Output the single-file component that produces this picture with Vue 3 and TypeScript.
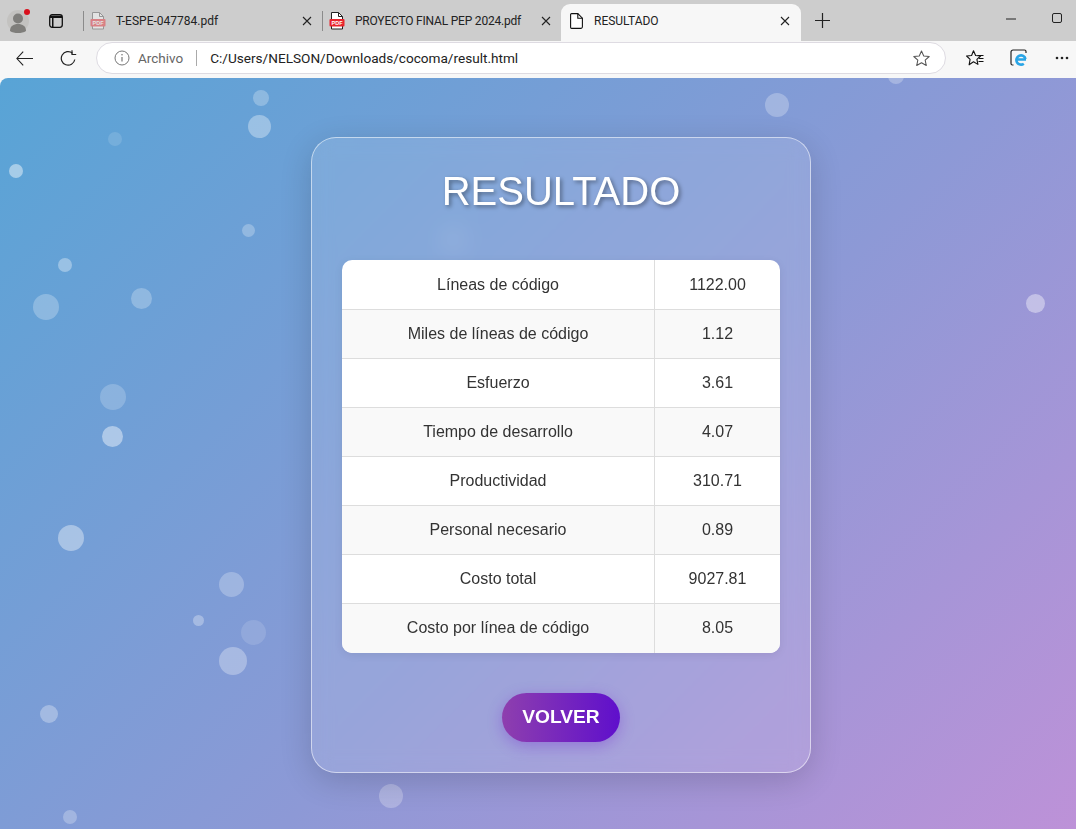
<script setup lang="ts">
interface Bubble { x: number; y: number; r: number; o: number }
const bubbles: Bubble[] = [
  { x: 261, y: 98, r: 8, o: 0.26 }, { x: 259, y: 126, r: 11.5, o: 0.34 }, { x: 115, y: 139, r: 7, o: 0.13 },
  { x: 16, y: 171, r: 7, o: 0.45 }, { x: 248, y: 230, r: 6.5, o: 0.26 }, { x: 65, y: 265, r: 7, o: 0.34 },
  { x: 46, y: 307, r: 13, o: 0.25 }, { x: 141, y: 298, r: 10.5, o: 0.25 }, { x: 113, y: 397, r: 13, o: 0.2 },
  { x: 112, y: 436, r: 10.5, o: 0.43 }, { x: 71, y: 538, r: 13, o: 0.38 }, { x: 231, y: 584, r: 12.5, o: 0.25 },
  { x: 198, y: 620, r: 5.5, o: 0.3 }, { x: 253, y: 632, r: 12.5, o: 0.13 }, { x: 233, y: 661, r: 14, o: 0.3 },
  { x: 49, y: 714, r: 9, o: 0.3 }, { x: 70, y: 817, r: 7, o: 0.26 }, { x: 391, y: 796, r: 12, o: 0.26 },
  { x: 777, y: 105, r: 12, o: 0.26 }, { x: 1035, y: 303, r: 9.5, o: 0.4 }, { x: 896, y: 76, r: 8, o: 0.26 },
  { x: 453, y: 240, r: 16, o: 0.07 },
]
const bubbleStyle = (b: Bubble) => ({
  left: `${b.x - b.r}px`,
  top: `${b.y - b.r - 78}px`,
  width: `${b.r * 2}px`,
  height: `${b.r * 2}px`,
  opacity: b.o,
})
const rows: [string, string][] = [
  ['Líneas de código', '1122.00'],
  ['Miles de líneas de código', '1.12'],
  ['Esfuerzo', '3.61'],
  ['Tiempo de desarrollo', '4.07'],
  ['Productividad', '310.71'],
  ['Personal necesario', '0.89'],
  ['Costo total', '9027.81'],
  ['Costo por línea de código', '8.05'],
]
</script>

<template>
  <div class="window">
    <header class="tabstrip">
      <div class="avatar">
        <svg width="24" height="26" viewBox="0 0 24 26">
          <circle cx="11" cy="13" r="11" fill="#c3c2c0" />
          <circle cx="11" cy="10.500" r="5" fill="#7f7e7b" />
          <path d="M3 23c0-5 3.500-7 8-7s8 2 8 7c-2 1.500-5 2-8 2s-6-.5-8-2z" fill="#7f7e7b" />
          <circle cx="20" cy="4" r="3" fill="#d90f1c" />
        </svg>
      </div>
      <svg class="vtabs" width="14" height="14" viewBox="0 0 14 14">
        <rect x="0.700" y="0.700" width="12.600" height="12.600" rx="2.500" fill="none" stroke="#111" stroke-width="1.300" />
        <path d="M1 1.500h12v2.500H4.500v9H3V4H1z" fill="#111" />
      </svg>
      <span class="sep"></span>
      <div class="tab">
        <svg class="pdf faded" width="16" height="18" viewBox="0 0 16 18">
          <path d="M2.500.500h7l4 4v12.500h-11z" fill="#fff" stroke="#555" />
          <path d="M9.500.500v4h4" fill="none" stroke="#555" />
          <rect x="0.500" y="7" width="15" height="7.500" rx="1" fill="#e8242c" />
          <text x="8" y="12.800" class="pdf-label">PDF</text>
        </svg>
        <span class="tab-title">T-ESPE-047784.pdf</span>
        <svg class="close" width="10" height="10" viewBox="0 0 10 10"><path d="M1 1l8 8M9 1l-8 8" stroke="#222" stroke-width="1.100" /></svg>
      </div>
      <span class="sep"></span>
      <div class="tab">
        <svg class="pdf" width="16" height="18" viewBox="0 0 16 18">
          <path d="M2.500.500h7l4 4v12.500h-11z" fill="#fff" stroke="#222" />
          <path d="M9.500.500v4h4" fill="none" stroke="#222" />
          <rect x="0.500" y="7" width="15" height="7.500" rx="1" fill="#e8242c" />
          <text x="8" y="12.800" class="pdf-label">PDF</text>
        </svg>
        <span class="tab-title tight">PROYECTO FINAL PEP 2024.pdf</span>
        <svg class="close" width="10" height="10" viewBox="0 0 10 10"><path d="M1 1l8 8M9 1l-8 8" stroke="#222" stroke-width="1.100" /></svg>
      </div>
      <div class="tab active">
        <svg class="doc" width="13" height="16" viewBox="0 0 13 16">
          <path d="M1.600.600h6.200l4.600 4.600v8.600a1.600 1.600 0 0 1-1.600 1.600H1.600A1.100 1.100 0 0 1 .600 14.300V1.600a1 1 0 0 1 1-1z" fill="#fff" stroke="#111" stroke-width="1.100" />
          <path d="M7.800.600v4.600h4.600" fill="none" stroke="#111" stroke-width="1.100" />
        </svg>
        <span class="tab-title">RESULTADO</span>
        <svg class="close" width="10" height="10" viewBox="0 0 10 10"><path d="M1 1l8 8M9 1l-8 8" stroke="#222" stroke-width="1.100" /></svg>
      </div>
      <svg class="newtab" width="15" height="15" viewBox="0 0 15 15"><path d="M7.500 0v15M0 7.500h15" stroke="#222" stroke-width="1.200" /></svg>
      <div class="winctl">
        <svg width="10" height="10" viewBox="0 0 10 10"><path d="M0 6h10" stroke="#222" /></svg>
        <svg width="10" height="10" viewBox="0 0 10 10"><rect x="0.500" y="0.500" width="9" height="9" rx="1.500" fill="none" stroke="#222" /></svg>
      </div>
    </header>

    <nav class="toolbar">
      <svg class="tool-back" width="17" height="15" viewBox="0 0 17 15"><path d="M7.200 .7L.9 7.500 7.200 14.300M1 7.500h16" fill="none" stroke="#222" stroke-width="1.100" /></svg>
      <svg class="tool-reload" width="17" height="17" viewBox="0 0 17 17"><path d="M14.800 9.500A6.800 6.800 0 1 1 12.500 3.200" fill="none" stroke="#222" stroke-width="1.200" /><path d="M12 .300v4.200h4.200" fill="none" stroke="#222" stroke-width="1.200" /></svg>
      <div class="address">
        <svg width="16" height="16" viewBox="0 0 16 16">
          <circle cx="8" cy="8" r="7" fill="none" stroke="#777" />
          <path d="M8 7v4.500" stroke="#777" stroke-width="1.200" />
          <circle cx="8" cy="4.800" r=".8" fill="#777" />
        </svg>
        <span class="archivo">Archivo</span>
        <span class="addr-sep"></span>
        <span class="url">C:/Users/NELSON/Downloads/cocoma/result.html</span>
        <svg class="star" width="17" height="16" viewBox="0 0 18 17"><path d="M9 1l2.400 5.300 5.800.6-4.300 3.900 1.200 5.700L9 13.600l-5.100 2.900 1.200-5.700L.8 6.900l5.800-.6z" fill="none" stroke="#555" stroke-width="1.100" stroke-linejoin="round" /></svg>
      </div>
      <svg class="tool-favs" width="18" height="17" viewBox="0 0 18 17">
        <path d="M7.500 .8l2.100 4.700 5 .5-3.700 3.300 1 5.100-4.400-2.600-4.400 3 1-5.400L.6 6l5-.5z" fill="none" stroke="#111" stroke-width="1.100" stroke-linejoin="round" />
        <path d="M11.500 5.500h6M13 8.500h4.500M12.500 11.500h5" stroke="#111" />
      </svg>
      <svg class="tool-edge" width="18" height="18" viewBox="0 0 18 18">
        <path d="M3.500 16H2.500A1.500 1.500 0 0 1 1 14.500V3a2 2 0 0 1 2-2h11.500A1.500 1.500 0 0 1 16 2.500V4" fill="none" stroke="#222" stroke-width="1.200" />
        <path d="M6.500 10.500h9.500M15.500 10A4.600 4.600 0 1 0 13.800 14.700" fill="none" stroke="#29a5e6" stroke-width="2.600" />
      </svg>
      <svg class="tool-more" width="14" height="4" viewBox="0 0 14 4"><circle cx="2" cy="2" r="1.300" fill="#222" /><circle cx="7" cy="2" r="1.300" fill="#222" /><circle cx="12" cy="2" r="1.300" fill="#222" /></svg>
    </nav>

    <main class="page">
      <span v-for="(b, i) in bubbles" :key="i" class="bubble" :style="bubbleStyle(b)"></span>
      <section class="card">
        <h1>RESULTADO</h1>
        <table>
          <tbody>
            <tr v-for="row in rows" :key="row[0]">
              <td>{{ row[0] }}</td>
              <td>{{ row[1] }}</td>
            </tr>
          </tbody>
        </table>
        <button type="button" class="back">VOLVER</button>
      </section>
    </main>
  </div>
</template>

<style>
html, body { margin: 0; background: #f7f7f7; }
</style>

<style scoped>
.window {
  width: 1076px;
  height: 829px;
  overflow: hidden;
  display: flex;
  flex-direction: column;
  background: #f7f7f7;
  font-family: Roboto, "Liberation Sans", sans-serif;
}
.tabstrip {
  height: 41px;
  flex: none;
  background: #cdcdcd;
  display: flex;
  align-items: flex-end;
}
.avatar { width: 24px; margin-left: 7px; height: 33px; }
.vtabs { margin: 0 0 13px 18px; }
.sep { width: 1px; height: 20px; background: #8b8b8b; margin-bottom: 10px; }
.vtabs + .sep { margin-left: 20px; }
.tab {
  width: 238px;
  height: 37px;
  flex: none;
  display: flex;
  align-items: center;
  padding: 0 10px 3px 6px;
  box-sizing: border-box;
}
.pdf { flex: none; }
.pdf.faded { opacity: 0.45; }
.pdf-label { font: bold 5.500px "Liberation Sans", sans-serif; fill: #fff; text-anchor: middle; }
.tab-title {
  margin-left: 10px;
  flex: 1;
  font-size: 12px;
  color: #222;
  white-space: nowrap;
}
.tab-title.tight { letter-spacing: -0.2px; }
.close { flex: none; }
.tab.active {
  background: #f7f7f7;
  border-radius: 9px 9px 0 0;
  width: 240px;
  padding: 0 11px 3px 9px;
}
.tab.active .tab-title { margin-left: 11px; }
.newtab { margin: 0 0 13px 14px; }
.winctl {
  margin-left: auto;
  width: 56px;
  margin-right: 14px;
  margin-bottom: 18px;
  display: flex;
  justify-content: space-between;
}
.toolbar {
  height: 37px;
  flex: none;
  box-sizing: border-box;
  display: flex;
  align-items: center;
  padding-bottom: 3px;
  background: #f7f7f7;
}
.tool-back { margin-left: 16px; }
.tool-reload { margin-left: 27px; }
.address {
  margin-left: 19px;
  width: 850px;
  height: 32px;
  box-sizing: border-box;
  border: 1px solid #dedbe2;
  border-radius: 16px;
  background: #fff;
  display: flex;
  align-items: center;
  padding: 0 15px 0 17px;
}
.archivo { margin-left: 8px; font-size: 13.500px; color: #666; }
.addr-sep { width: 1px; height: 16px; background: #aaa; margin: 0 13px 0 13px; }
.url { font-size: 13.600px; color: #222; }
.star { margin-left: auto; }
.tool-favs { margin-left: 20px; }
.tool-edge { margin-left: 26px; }
.tool-more { margin-left: 27px; }
.page {
  position: relative;
  width: 1122px;
  flex: 1;
  overflow: hidden;
  display: flex;
  justify-content: center;
  align-items: flex-start;
  padding-top: 59px;
  box-sizing: border-box;
  border-radius: 8px 0 0 0;
  background: linear-gradient(135deg, #58a4d6 0%, #8d99d6 55%, #c091d8 100%);
  font-family: "Liberation Sans", Arial, sans-serif;
}
.bubble {
  position: absolute;
  border-radius: 50%;
  background: #fff;
}
.card {
  position: relative;
  width: 500px;
  box-sizing: border-box;
  padding: 30px;
  border: 1px solid rgba(255, 255, 255, 0.55);
  border-radius: 25px;
  background: rgba(255, 255, 255, 0.11);
  backdrop-filter: blur(10px);
  box-shadow: 0 8px 32px rgba(0, 0, 0, 0.16);
  display: flex;
  flex-direction: column;
  align-items: center;
}
h1 {
  margin: 0 0 46px;
  font-size: 40px;
  font-weight: 400;
  line-height: 46px;
  color: #fff;
  text-shadow: 2px 2px 4px rgba(0, 0, 0, 0.4);
}
table {
  width: 100%;
  border-collapse: collapse;
  border-radius: 10px;
  overflow: hidden;
  background: #fff;
  box-shadow: 0 2px 8px rgba(0, 0, 0, 0.08);
}
td {
  height: 18px;
  padding: 15px;
  text-align: center;
  font-size: 16px;
  line-height: 18px;
  color: #333;
  border: 1px solid #ddd;
}
tr:first-child td { border-top: 0; padding-top: 16px; }
tr:last-child td { border-bottom: 0; padding-bottom: 16px; }
td:first-child { border-left: 0; width: 282px; }
td:last-child { border-right: 0; }
tr:nth-child(even) td { background: #f9f9f9; }
.back {
  margin-top: 40px;
  width: 118px;
  height: 49px;
  border: 0;
  border-radius: 25px;
  padding: 0 0 2px;
  background: linear-gradient(90deg, #8e3fae, #5f0fcc);
  color: #fff;
  font: bold 19.200px "Liberation Sans", Arial, sans-serif;
  box-shadow: 0 4px 15px rgba(106, 17, 203, 0.3);
}
</style>
